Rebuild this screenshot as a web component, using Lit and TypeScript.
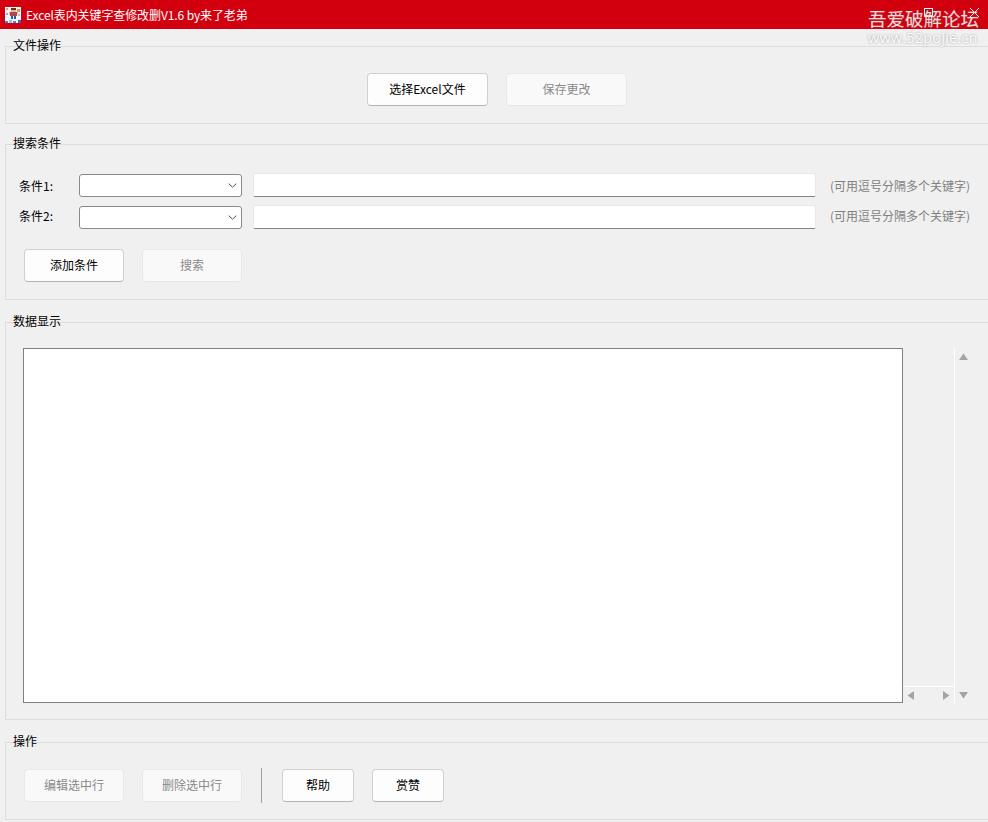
import { LitElement, html, css, svg } from "lit";
import { customElement } from "lit/decorators.js";

const PIXELS: [number, number, number, number, string][] = [
  [0, 0, 16, 16, "#f7f8fb"],
  [1, 1, 2, 2, "#d9a06a"], [12, 2, 3, 3, "#e8953c"], [1, 6, 2, 2, "#7fb2dc"], [13, 7, 2, 2, "#9cc6ea"],
  [6, 1, 5, 2, "#7a2a1e"], [6, 3, 5, 2, "#f0b48c"], [5, 5, 7, 4, "#d93a2a"],
  [4, 5, 1, 3, "#f0b48c"], [12, 4, 1, 3, "#f0b48c"], [7, 6, 3, 2, "#3b6fc0"],
  [6, 9, 2, 3, "#2c55a8"], [9, 9, 2, 3, "#2c55a8"],
  [0, 14, 3, 2, "#3f86d6"], [4, 13, 3, 3, "#8fc1ea"], [8, 14, 3, 2, "#3f86d6"], [13, 13, 3, 3, "#2d6fc2"],
];

@customElement("app-root")
export class AppRoot extends LitElement {
  static styles = css`
    :host {
      display: block;
      position: relative;
      width: 988px;
      height: 822px;
      overflow: hidden;
      background: #f0f0f0;
      color: #000;
      font: 12px/16px "Noto Sans CJK SC", "Noto Sans", sans-serif;
    }
    .title {
      height: 29px;
      background: #d2000f;
      color: #fff;
      display: flex;
      align-items: center;
      padding-left: 5px;
      gap: 5px;
      letter-spacing: -0.1px;
    }
    .title svg { display: block; }
    .group {
      box-sizing: border-box;
      width: 984px;
      margin-left: 5px;
      border: 1px solid #dcdcdc;
    }
    .legend { margin: -10px 0 0 7px; height: 17px; }
    .g1 { margin-top: 17px; height: 78px; }
    .g2 { margin-top: 20px; height: 156px; }
    .g3 { margin-top: 22px; height: 398px; }
    .g4 { margin-top: 22px; height: 78px; }
    .btn {
      box-sizing: border-box;
      height: 33px;
      width: 100px;
      flex: none;
      display: flex;
      align-items: center;
      justify-content: center;
      padding-bottom: 1px;
      border: 1px solid #d0d0d0;
      border-bottom-color: #b4b4b4;
      border-radius: 4px;
      background: #fdfdfd;
    }
    .btn.off { background: #f9f9f9; border-color: #e8e8e8; color: #8a8a8a; }
    .btn.w120 { width: 121px; }
    .btn.w72 { width: 72px; }
    .files {
      display: flex;
      justify-content: center;
      gap: 18px;
      margin-top: 19px;
    }
    .rows { margin: 21px 0 0 13px; display: grid; gap: 8px; }
    .row { display: flex; align-items: center; height: 24px; }
    .row .lab { width: 60px; flex: none; padding-top: 1px; }
    .row + .row .lab { padding: 0 0 2px; }
    .combo {
      box-sizing: border-box;
      width: 163px;
      height: 23px;
      flex: none;
      background: #fff;
      border: 1px solid #8a8a8a;
      border-radius: 3px;
      display: flex;
      align-items: center;
      justify-content: flex-end;
      padding-right: 4px;
    }
    .input {
      box-sizing: border-box;
      width: 563px;
      height: 24px;
      flex: none;
      margin-left: 11px;
      background: #fff;
      border: 1px solid #e8e8e8;
      border-bottom: 1px solid #858585;
      border-radius: 3px 3px 2px 2px;
    }
    .hint { margin-left: 14px; padding-top: 1px; color: #808080; white-space: nowrap; }
    .row + .row .hint { padding: 0 0 2px; }
    .actions { display: flex; gap: 18px; margin: 20px 0 0 18px; }
    .data {
      display: flex;
      margin: 18px 0 0 17px;
      height: 355px;
    }
    .box {
      box-sizing: border-box;
      width: 880px;
      flex: none;
      background: #fff;
      border: 1px solid #7b8089;
    }
    .hbar { width: 51px; flex: none; display: flex; flex-direction: column; justify-content: flex-end; }
    .hbar-in {
      box-sizing: border-box;
      height: 17px;
      border-top: 1px solid #fff;
      display: flex;
      align-items: center;
      justify-content: space-between;
      padding: 0 4px;
    }
    .vbar {
      box-sizing: border-box;
      width: 17px;
      flex: none;
      border-left: 1px solid #fff;
      display: flex;
      flex-direction: column;
      align-items: center;
      justify-content: space-between;
      padding: 5px 0 4px;
    }
    .arrow { display: block; }
    .ops { display: flex; align-items: center; margin: 18px 0 0 18px; }
    .ops .btn.off + .btn.off { margin-left: 18px; }
    .sep { width: 1px; height: 35px; background: #a0a0a0; margin: 0 20px 0 19px; }
    .ops .btn.w72 + .btn.w72 { margin-left: 18px; }
    .mark {
      position: absolute;
      top: 7px;
      left: 868px;
      width: 114px;
      pointer-events: none;
    }
    .mark .cn {
      font-size: 18.5px;
      line-height: 22px;
      white-space: nowrap;
      color: rgba(255, 255, 255, 0.78);
      text-shadow: 0 0 1px rgba(150, 150, 150, 0.7);
    }
    .mark .en {
      font: 14.5px/18px "Open Sans", "Noto Sans", sans-serif;
      letter-spacing: 0.2px;
      white-space: nowrap;
      color: #fff;
      text-shadow: 0 0 2px rgba(110, 110, 110, 0.75);
    }
    .win { position: absolute; top: 8px; left: 923px; pointer-events: none; }
  `;

  private up() {
    return html`<svg class="arrow" width="9" height="7" viewBox="0 0 9 7"><path d="M4.5 0.5 9 7H0z" fill="#a4a4a4"/></svg>`;
  }
  private down() {
    return html`<svg class="arrow" width="9" height="7" viewBox="0 0 9 7"><path d="M0 0h9L4.5 6.5z" fill="#a4a4a4"/></svg>`;
  }
  private left() {
    return html`<svg class="arrow" width="7" height="9" viewBox="0 0 7 9"><path d="M0.5 4.5 7 0v9z" fill="#a4a4a4"/></svg>`;
  }
  private right() {
    return html`<svg class="arrow" width="7" height="9" viewBox="0 0 7 9"><path d="M0 0l6.5 4.5L0 9z" fill="#a4a4a4"/></svg>`;
  }
  private chev() {
    return html`<svg width="9" height="5" viewBox="0 0 9 5"><path d="M.7 .6 4.5 4.2 8.3 .6" fill="none" stroke="#555" stroke-width="1"/></svg>`;
  }
  private row(n: number) {
    return html`<div class="row">
      <div class="lab">条件${n}:</div>
      <div class="combo">${this.chev()}</div>
      <div class="input"></div>
      <div class="hint">(可用逗号分隔多个关键字)</div>
    </div>`;
  }

  render() {
    return html`
      <div class="title">
        <svg width="16" height="16" viewBox="0 0 16 16" shape-rendering="crispEdges">
          ${PIXELS.map(([x, y, w, h, f]) => svg`<rect x=${x} y=${y} width=${w} height=${h} fill=${f}></rect>`)}
        </svg>
        <span>Excel表内关键字查修改删V1.6 by来了老弟</span>
      </div>

      <section class="group g1">
        <div class="legend">文件操作</div>
        <div class="files">
          <div class="btn w120">选择Excel文件</div>
          <div class="btn off w120">保存更改</div>
        </div>
      </section>

      <section class="group g2">
        <div class="legend">搜索条件</div>
        <div class="rows">${this.row(1)}${this.row(2)}</div>
        <div class="actions">
          <div class="btn">添加条件</div>
          <div class="btn off">搜索</div>
        </div>
      </section>

      <section class="group g3">
        <div class="legend">数据显示</div>
        <div class="data">
          <div class="box"></div>
          <div class="hbar"><div class="hbar-in">${this.left()}${this.right()}</div></div>
          <div class="vbar">${this.up()}${this.down()}</div>
        </div>
      </section>

      <section class="group g4">
        <div class="legend">操作</div>
        <div class="ops">
          <div class="btn off">编辑选中行</div>
          <div class="btn off">删除选中行</div>
          <div class="sep"></div>
          <div class="btn w72">帮助</div>
          <div class="btn w72">赏赞</div>
        </div>
      </section>

      <svg class="win" width="56" height="10" viewBox="0 0 56 10">
        <rect x="1.5" y="0.5" width="8" height="8" fill="none" stroke="#fff"/>
        <path d="M47 0l9 9M56 0l-9 9" stroke="#fff" fill="none"/>
      </svg>
      <div class="mark">
        <div class="cn">吾爱破解论坛</div>
        <div class="en">www.52pojie.cn</div>
      </div>
    `;
  }
}
